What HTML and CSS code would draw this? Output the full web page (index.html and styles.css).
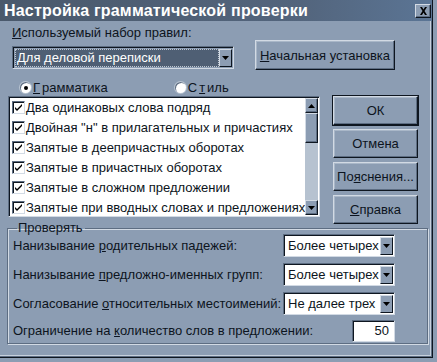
FILE: index.html
```html
<!DOCTYPE html>
<html lang="ru">
<head>
    <meta charset="UTF-8">
    <title>Настройка грамматической проверки</title>
    <link rel="stylesheet" href="styles.css">
</head>
<body>
    <div class="dialog">
        <div class="titlebar">
            <span class="title">Настройка грамматической проверки</span>
            <button class="close">
                <svg width="9" height="8" viewBox="0 0 9 8"><path d="M1 0h2l1.5 2.5L6 0h2L5.5 4 8 8H6L4.5 5.5 3 8H1l2.5-4z" fill="#000"/></svg>
            </button>
        </div>

        <div class="content">
            <div class="top">
                <div class="ruleset">
                    <div class="label"><u>И</u>спользуемый набор правил:</div>
                    <div class="combo ruleset-combo selected">
                        <span class="value"><span class="focus">Для деловой переписки</span></span>
                        <span class="drop"><svg width="7" height="4" viewBox="0 0 7 4"><path d="M0 0h7L3.5 4z" fill="#000"/></svg></span>
                    </div>
                </div>
                <button class="btn reset"><u>Н</u>ачальная установка</button>
            </div>

            <div class="radios">
                <label class="radio checked"><span class="dot"></span><u>Г</u>рамматика</label>
                <label class="radio style"><span class="dot"></span>С<u>т</u>иль</label>
            </div>

            <div class="main">
                <div class="listbox">
                    <ul class="items">
                        <li><span class="check"></span>Два одинаковых слова подряд</li>
                        <li><span class="check"></span>Двойная "н" в прилагательных и причастиях</li>
                        <li><span class="check"></span>Запятые в деепричастных оборотах</li>
                        <li><span class="check"></span>Запятые в причастных оборотах</li>
                        <li><span class="check"></span>Запятые в сложном предложении</li>
                        <li><span class="check"></span>Запятые при вводных словах и предложениях</li>
                    </ul>
                    <div class="scrollbar">
                        <span class="arrow"><svg width="7" height="4" viewBox="0 0 7 4"><path d="M0 4h7L3.5 0z" fill="#000"/></svg></span>
                        <span class="thumb"></span>
                        <span class="track"></span>
                        <span class="arrow"><svg width="7" height="4" viewBox="0 0 7 4"><path d="M0 0h7L3.5 4z" fill="#000"/></svg></span>
                    </div>
                </div>
                <div class="buttons">
                    <button class="btn default">ОК</button>
                    <button class="btn">Отмена</button>
                    <button class="btn">По<u>я</u>снения...</button>
                    <button class="btn"><u>С</u>правка</button>
                </div>
            </div>

            <fieldset class="group">
                <legend>Проверять</legend>
                <div class="row">
                    <span>Нанизывание <u>р</u>одительных падежей:</span>
                    <div class="combo small">
                        <span class="value">Более четырех</span>
                        <span class="drop"><svg width="7" height="4" viewBox="0 0 7 4"><path d="M0 0h7L3.5 4z" fill="#000"/></svg></span>
                    </div>
                </div>
                <div class="row">
                    <span>Нанизывание <u>п</u>редложно-именных групп:</span>
                    <div class="combo small">
                        <span class="value">Более четырех</span>
                        <span class="drop"><svg width="7" height="4" viewBox="0 0 7 4"><path d="M0 0h7L3.5 4z" fill="#000"/></svg></span>
                    </div>
                </div>
                <div class="row">
                    <span>Согласование <u>о</u>тносительных местоимений:</span>
                    <div class="combo small">
                        <span class="value">Не далее трех</span>
                        <span class="drop"><svg width="7" height="4" viewBox="0 0 7 4"><path d="M0 0h7L3.5 4z" fill="#000"/></svg></span>
                    </div>
                </div>
                <div class="row last">
                    <span>Ограничение на <u>к</u>оличество слов в предложении:</span>
                    <div class="field">50</div>
                </div>
            </fieldset>
        </div>
    </div>
</body>
</html>
```

FILE: styles.css
```css
/* Base */
body {
    margin: 0;
    background: #8c9db3;
    font-family: 'Liberation Sans', Arial, sans-serif;
    font-size: 13px;
    color: #0c1420;
}

u {
    text-decoration: underline;
    text-underline-offset: 1px;
}

/* Dialog frame */
.dialog {
    width: 433px;
    height: 358px;
    box-sizing: border-box;
    background: #8c9db3;
    border-right: 1px solid #0e1620;
    border-bottom: 1px solid #0e1620;
    box-shadow: inset -1px -1px #5d6d82, inset -2px -2px #c6d0dc;
}

/* Title bar */
.titlebar {
    height: 21px;
    display: flex;
    align-items: center;
    justify-content: space-between;
    padding: 0 1px 0 4px;
    background: linear-gradient(to right, #4a596c, #53657d 70%, #5b7595);
}

.title {
    color: #fff;
    font-weight: bold;
    font-size: 16px;
    letter-spacing: 0.2px;
}

.close {
    width: 16px;
    height: 14px;
    padding: 0;
    display: flex;
    align-items: center;
    justify-content: center;
    background: #8c9db3;
    border: 1px solid;
    border-color: #d2dae4 #0e1620 #0e1620 #d2dae4;
    box-shadow: inset -1px -1px #5d6d82;
}

/* Content */
.content {
    padding: 4px 0 0 8px;
}

.top {
    display: flex;
    align-items: flex-start;
}

.ruleset {
    margin-left: 4px;
}

.label {
    height: 16px;
    line-height: 16px;
}

/* Buttons */
.btn {
    font-family: 'Liberation Sans', Arial, sans-serif;
    font-size: 13px;
    font-weight: normal;
    color: #0c1420;
    background: #8c9db3;
    border: 1px solid;
    border-color: #d2dae4 #0e1620 #0e1620 #d2dae4;
    box-shadow: inset -1px -1px #5d6d82, inset 1px 1px #a9b7c8;
    padding: 0;
    height: 29px;
}

.btn.default {
    outline: 1px solid #0e1620;
}

.reset {
    width: 140px;
    height: 30px;
    margin: 15px 0 0 21px;
}

/* Combo boxes */
.combo {
    display: flex;
    box-sizing: border-box;
    height: 23px;
    background: #fff;
    border: 1px solid;
    border-color: #5d6d82 #d2dae4 #d2dae4 #5d6d82;
    box-shadow: inset 1px 1px #0e1620;
    padding: 2px 1px 1px 2px;
}

.combo .value {
    flex: 1;
    line-height: 18px;
    padding-left: 2px;
    white-space: nowrap;
    overflow: hidden;
}

.combo .drop {
    width: 13px;
    display: flex;
    align-items: center;
    justify-content: center;
    background: #8c9db3;
    box-sizing: border-box;
    border: 1px solid;
    border-color: #d2dae4 #0e1620 #0e1620 #d2dae4;
}

.ruleset-combo {
    width: 222px;
    margin-top: 5px;
    background: #8c9db3;
}

.selected .value {
    background: #4f5f74;
    color: #fff;
    padding: 1px;
}

.selected .focus {
    display: block;
    height: 16px;
    line-height: 16px;
    outline: 1px dotted #c0c8d2;
    padding-left: 1px;
}

/* Radios */
.radios {
    display: flex;
    height: 16px;
    margin: 9px 0 1px 12px;
    align-items: center;
}

.radio {
    display: flex;
    align-items: center;
    gap: 2px;
}

.radio.style {
    margin-left: 67px;
}

.dot {
    width: 11px;
    height: 11px;
    border-radius: 50%;
    background: #fff;
    box-shadow: inset 1px 1px #5d6d82, 0 0 0 1px #b8c4d2;
    position: relative;
}

.radio.checked .dot::after {
    content: "";
    position: absolute;
    left: 4px;
    top: 4px;
    width: 4px;
    height: 4px;
    border-radius: 50%;
    background: #000;
}

/* List box */
.main {
    display: flex;
    align-items: flex-start;
}

.listbox {
    width: 312px;
    height: 121px;
    box-sizing: border-box;
    display: flex;
    background: #fff;
    border: 1px solid;
    border-color: #5d6d82 #d2dae4 #d2dae4 #5d6d82;
    box-shadow: inset 1px 1px #0e1620;
    padding: 1px 1px 1px 2px;
    overflow: hidden;
}

.items {
    flex: 1;
    list-style: none;
    margin: -1px 0 0;
    padding: 0;
}

.items li {
    height: 20px;
    display: flex;
    align-items: center;
    gap: 1px;
    white-space: nowrap;
    padding-left: 1px;
}

.check {
    width: 13px;
    height: 13px;
    box-sizing: border-box;
    border: 1px solid;
    border-color: #5d6d82 #d2dae4 #d2dae4 #5d6d82;
    box-shadow: inset 1px 1px #0e1620;
    background: #fff url("data:image/svg+xml,%3Csvg xmlns='http://www.w3.org/2000/svg' width='11' height='11'%3E%3Cpath d='M2 5l2 2 5-5v2l-5 5-2-2z' fill='%23000'/%3E%3C/svg%3E") no-repeat center;
}

.scrollbar {
    width: 15px;
    display: flex;
    flex-direction: column;
    background: #b6c2d0;
}

.scrollbar .arrow,
.scrollbar .thumb {
    height: 15px;
    box-sizing: border-box;
    background: #8c9db3;
    border: 1px solid;
    border-color: #d2dae4 #0e1620 #0e1620 #d2dae4;
    box-shadow: inset -1px -1px #5d6d82;
    display: flex;
    align-items: center;
    justify-content: center;
}

.scrollbar .thumb {
    height: 30px;
}

.scrollbar .track {
    flex: 1;
}

.buttons {
    display: flex;
    flex-direction: column;
    gap: 4px;
    margin-left: 13px;
    width: 85px;
}

/* Group box */
.group {
    width: 421px;
    box-sizing: border-box;
    margin: -1px 0 0 -1px;
    padding: 0 32px 0 5px;
    border: 1px solid #5d6d82;
    box-shadow: 1px 1px #d2dae4, inset 1px 1px #d2dae4;
}

.group legend {
    padding: 0 2px 0 1px;
    margin-left: 4px;
    line-height: 10px;
}

.row {
    display: flex;
    justify-content: space-between;
    align-items: center;
    height: 29px;
}

.row:first-of-type {
    margin-top: -2px;
}

.combo.small {
    width: 112px;
}

.field {
    width: 43px;
    height: 22px;
    box-sizing: border-box;
    background: #fff;
    border: 1px solid;
    border-color: #5d6d82 #d2dae4 #d2dae4 #5d6d82;
    box-shadow: inset 1px 1px #0e1620;
    text-align: right;
    line-height: 20px;
    padding-right: 5px;
}

.row.last {
    height: 25px;
}
```
